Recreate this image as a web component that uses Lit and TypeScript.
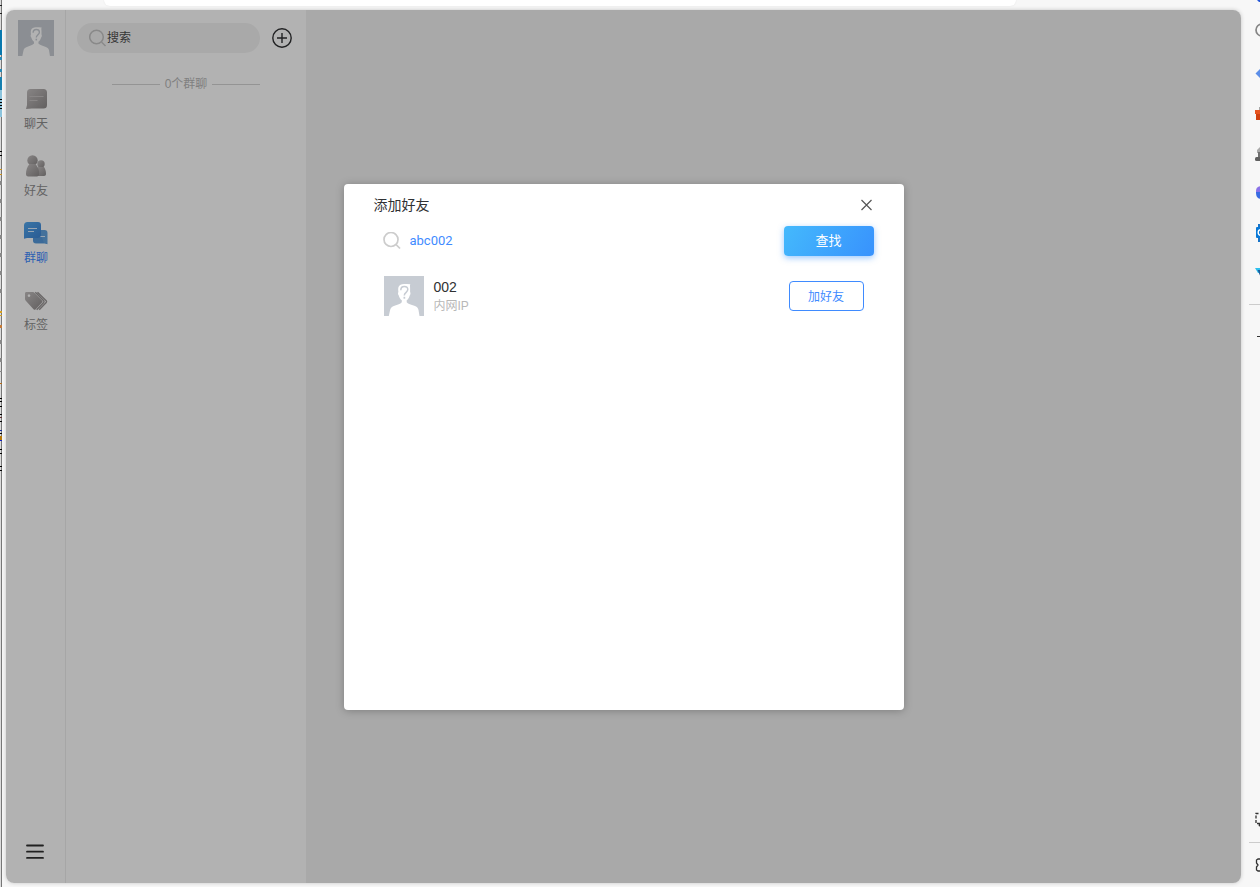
import { LitElement, html, css, svg, TemplateResult } from "lit";
import { customElement, property, state } from "lit/decorators.js";

const fontStack = css`"Liberation Sans", "Noto Sans CJK SC", sans-serif`;

@customElement("user-avatar")
class UserAvatar extends LitElement {
  static styles = css`
    :host { display: block; flex: none; width: 40px; height: 40px; }
    .pic { display: block; width: 100%; height: 100%; }
  `;
  render() {
    return html`<svg class="pic" viewBox="0 0 40 40" aria-hidden="true">
      <rect width="40" height="40" fill="#c7ccd3" />
      <path fill="#fff" d="M14.500 11c.8-2 2.800-3 5.500-3 2 0 4 .2 6.300.2-.6 1.300-.2 2.300-.2 3.800v4c.7.500.4 2.800-.4 3.400-.5 2-1.600 3.700-3 4.900v1.900c1.500 1.800 4.500 2.500 7.600 3.500 2.800.9 3.800 2.300 4.200 4.300L35.500 40H4.800l1.300-6c.4-2 1.600-3.400 4.400-4.300 3.100-1 5.800-1.700 7.300-3.500v-1.900c-1.400-1.200-2.500-2.900-3-4.900-.8-.6-1.100-2.900-.4-3.400-.2-1.700-.4-3.500.1-5z" />
      <path fill="none" stroke="#c7ccd3" stroke-width="1.500" d="M16.800 14.200c0-2.300 1.500-3.700 3.500-3.700 2.100 0 3.500 1.300 3.500 3.100 0 2.600-3.500 2.900-3.500 5.900" />
      <rect x="19.500" y="20.800" width="1.700" height="1.900" fill="#c7ccd3" />
    </svg>`;
  }
}

type NavKey = "chat" | "friends" | "groups" | "tags";

const navIcons: Record<NavKey, TemplateResult> = {
  chat: svg`
    <path fill="url(#g)" d="M6.500 2H19.500a3.500 3.500 0 0 1 3.500 3.500v12.500a3.500 3.500 0 0 1-3.500 3.500H8L2 22l1-4V5.500A3.500 3.500 0 0 1 6.500 2z" />
    <path stroke="#c4c0c0" stroke-width="1" d="M5.500 9.500h14M5.500 13.500h8" />`,
  friends: svg`
    <circle cx="17" cy="10" r="3.700" fill="url(#g)" />
    <path fill="url(#g)" d="M14 13h6c1.500 2.200 2 4.500 2 7 0 1.200-.8 2-2 2h-7z" />
    <circle cx="8.500" cy="6.400" r="5.200" fill="url(#g)" />
    <path fill="url(#g)" d="M5.500 10h6c2.500 3 3.700 5.500 3.700 9.500 0 1.900-.8 2.900-2.500 2.900H4.300c-1.700 0-2.300-.8-2.300-2.300C2 16 3 13 5.500 10z" />`,
  groups: svg`
    <path fill="#62a3de" d="M12 9h8.500a3 3 0 0 1 3 3v11.300l-3-.8H12a3 3 0 0 1-3-3V9z" />
    <path fill="url(#b)" d="M3.500 1h10.500A3 3 0 0 1 17 4v9.500a3.500 3.500 0 0 1-3.500 3.500H3l-3 .8V4.500A3.500 3.500 0 0 1 3.500 1z" />
    <path fill="#3f86d6" d="M9 17h4.500a3.500 3.500 0 0 0 3.500-3.500l3 8.500h-8a3 3 0 0 1-3-3z" opacity=".35" />
    <path stroke="#dcecff" stroke-width="1.200" d="M4 7.500h9M4 10.500h6M16.500 15.500h4.500" />`,
  tags: svg`
    <path fill="url(#g)" fill-rule="evenodd" d="M2.500 4H8.500c1 0 1.500.3 2.200 1l7.300 7.400c.7.800.7 1.500 0 2.200l-6.300 6.600c-.7.700-1.400.7-2.200 0L2 13c-.7-.7-1-1.300-1-2V5.500c0-1 .5-1.500 1.500-1.500zM5 6.300a1.300 1.300 0 1 0 .01 0z" />
    <path fill="none" stroke="#9a9696" stroke-width="1.400" d="M11.300 4.200l8.400 8.500c.5.600.5 1.200 0 1.700l-7 7.400M13.500 4.200l8.700 8.500c.5.600.5 1.200 0 1.700l-7 7.400" />`,
};

@customElement("side-nav")
class SideNav extends LitElement {
  @property() active: NavKey = "groups";
  static styles = css`
    :host { display: flex; flex-direction: column; align-items: center; width: 60px; box-sizing: border-box; padding-top: 10px; border-right: 1px solid #eee; background: #fff; }
    button { font: inherit; border: 0; background: none; padding: 0; cursor: pointer; }
    .me { width: 36px; height: 36px; }
    .items { display: flex; flex-direction: column; gap: 21px; margin-top: 31px; }
    .item { display: flex; flex-direction: column; align-items: center; gap: 4px; padding-left: 1px; color: #8e8e8e; font-size: 12px; line-height: 18px; }
    .active { color: #3f8bff; }
    .menu { margin-top: auto; margin-bottom: 22px; height: 18px; margin-right: 1px; }
    svg { display: block; }
  `;
  render() {
    const items: [NavKey, string][] = [["chat", "聊天"], ["friends", "好友"], ["groups", "群聊"], ["tags", "标签"]];
    return html`
      <user-avatar class="me"></user-avatar>
      <nav class="items">
        ${items.map(([key, label]) => html`
          <button class="item ${key === this.active ? "active" : ""}" @click=${() => (this.active = key)}>
            <svg width="24" height="24" viewBox="0 0 24 24" aria-hidden="true">
              <defs>
                <linearGradient id="g" x1="0" y1="0" x2="1" y2="1"><stop stop-color="#c4c0c0" /><stop offset="1" stop-color="#8d8989" /></linearGradient>
                <linearGradient id="b" x1="0" y1="0" x2="1" y2="1"><stop stop-color="#53a8ee" /><stop offset="1" stop-color="#3d83d4" /></linearGradient>
              </defs>
              ${navIcons[key]}
            </svg>
            <span>${label}</span>
          </button>`)}
      </nav>
      <button class="menu" aria-label="菜单">
        <svg width="18" height="18" viewBox="0 0 18 18"><path stroke="#303030" stroke-width="1.800" stroke-linecap="round" d="M1 2.500h16M1 8.700h16M1 14.900h16" /></svg>
      </button>`;
  }
}

@customElement("group-list")
class GroupList extends LitElement {
  static styles = css`
    :host { display: block; width: 240px; box-sizing: border-box; padding: 13px 14px 0 11px; background: #fff; }
    .bar { display: flex; align-items: center; gap: 12px; }
    .pill { display: flex; align-items: center; flex: 1; min-width: 0; height: 30px; padding: 0 12px; box-sizing: border-box; border-radius: 15px; background: #f3f3f3; }
    .field { flex: 1; min-width: 0; border: 0; padding: 0; outline: 0; background: none; font: inherit; font-size: 12px; }
    .field::placeholder { color: #505050; opacity: 1; }
    .add { flex: none; width: 20px; height: 20px; border: 0; padding: 0; background: none; cursor: pointer; }
    .count { display: flex; align-items: center; justify-content: center; gap: 5px; margin: 22px 0 0 3px; color: #b8b8b8; font-size: 12px; line-height: 18px; }
    .count::before, .count::after { content: ""; width: 48px; height: 1px; background: #d4d4d4; }
    svg { display: block; flex: none; }
  `;
  render() {
    return html`
      <div class="bar">
        <label class="pill">
          <svg width="18" height="18" viewBox="0 0 18 18" aria-hidden="true"><g fill="none" stroke="#c4c4c4" stroke-width="1.500"><circle cx="7.500" cy="8" r="6.800" /><path d="M12.500 13l4 4" /></g></svg>
          <input class="field" type="text" aria-label="搜索" placeholder="搜索" />
        </label>
        <button class="add" aria-label="添加">
          <svg width="20" height="20" viewBox="0 0 20 20"><g fill="none" stroke="#303133" stroke-width="1.400"><circle cx="10" cy="10" r="9.200" /><path d="M10 5v10M5 10h10" /></g></svg>
        </button>
      </div>
      <div class="count">0个群聊</div>`;
  }
}

@customElement("add-friend-dialog")
class AddFriendDialog extends LitElement {
  @state() private query = "abc002";
  static styles = css`
    :host { display: block; width: 560px; min-height: 526px; box-sizing: border-box; padding: 10px 30px; border-radius: 4px; background: #fff; box-shadow: 0 1px 8px rgba(0, 0, 0, .25); }
    .head, .search, .result { display: flex; align-items: center; }
    .title { flex: 1; margin: 0; font-size: 14px; line-height: 22px; font-weight: 400; color: #303133; }
    .close { width: 16px; height: 16px; padding: 0; border: 0; background: none; cursor: pointer; }
    .search { height: 30px; margin-top: 10px; padding-left: 9px; gap: 9px; }
    .field { flex: 1; min-width: 0; border: 0; padding: 0; outline: 0; background: none; font-family: Roboto, "Noto Sans CJK SC", sans-serif; font-size: 13px; color: #3f8bff; }
    .find { width: 90px; height: 30px; border: 0; border-radius: 4px; padding: 0 0 2px; color: #fff; font: inherit; font-size: 13px; background: linear-gradient(120deg, #44b9fc, #3892fd); box-shadow: 0 2px 6px rgba(56, 146, 253, .5); cursor: pointer; }
    .result { margin-top: 20px; padding: 0 10px; gap: 10px; }
    .who { flex: 1; }
    .name { font-size: 14px; line-height: 20px; color: #303133; }
    .from { font-size: 12px; line-height: 18px; color: #b8b8b8; }
    .befriend { width: 75px; height: 30px; padding: 0; border: 1px solid #3f8bff; border-radius: 4px; background: #fff; color: #3f8bff; font: inherit; font-size: 12px; cursor: pointer; }
    svg { display: block; flex: none; }
  `;
  render() {
    return html`
      <header class="head">
        <h2 class="title">添加好友</h2>
        <button class="close" aria-label="关闭">
          <svg width="16" height="16" viewBox="0 0 16 16"><path stroke="#555" stroke-width="1.200" d="M3.500 3l10 10M13.500 3l-10 10" /></svg>
        </button>
      </header>
      <div class="search">
        <svg width="18" height="18" viewBox="0 0 18 18" aria-hidden="true"><g fill="none" stroke="#ccc" stroke-width="1.700"><circle cx="8" cy="7.500" r="7" /><path d="M13 12.500l4 4" /></g></svg>
        <input class="field" type="text" aria-label="查找好友" .value=${this.query} @input=${(e: Event) => (this.query = (e.target as HTMLInputElement).value)} />
        <button class="find">查找</button>
      </div>
      <div class="result">
        <user-avatar></user-avatar>
        <div class="who">
          <div class="name">002</div>
          <div class="from">内网IP</div>
        </div>
        <button class="befriend">加好友</button>
      </div>`;
  }
}

@customElement("browser-rail")
class BrowserRail extends LitElement {
  static styles = css`
    :host { display: flex; flex-direction: column; width: 19px; overflow: hidden; }
    .tool { display: flex; align-items: center; flex: none; width: 34px; height: 40px; padding: 0 0 0 13px; border: 0; background: none; }
    .top { height: 12px; align-items: flex-start; }
    .rule { flex: none; height: 1px; margin: 12px 0 11px 8px; background: #ccc; }
    .low { margin: 3px 0 2px 8px; }
    .end { margin-top: auto; }
    .last { height: 42px; padding-bottom: 2px; box-sizing: border-box; }
    svg { display: block; flex: none; }
  `;
  render() {
    const tools: [string, TemplateResult][] = [
      ["搜索", svg`<circle cx="8" cy="10" r="6" fill="none" stroke="#858585" stroke-width="1.700" />`],
      ["购物", svg`<path fill="#5c8ee8" d="M1.500 13.500L9 6v15z" />`],
      ["工具", svg`<path fill="#e65420" d="M1 10h18v4H1z" /><path fill="#cf4010" d="M2 14h17v6H2z" /><path fill="#aaa" d="M5 7h3v3H5z" />`],
      ["游戏", svg`<path fill="#aaa" d="M7 6l-4 4v3h8V6z" /><path fill="#707070" d="M4 12h8v5H4z" /><rect x="1" y="17" width="12" height="4" rx="1.500" fill="#606060" />`],
      ["应用", svg`<path fill="#8a72e8" d="M8 6C3 6 2 8 2 12h8V6z" /><path fill="#386be2" d="M2 12c0 4 1 7 6 7h3v-7z" />`],
      ["邮件", svg`<rect x="4" y="4" width="12" height="18" fill="#1673c8" /><rect x="2" y="7" width="10" height="11" rx="1" fill="#0879d8" /><circle cx="7" cy="12.500" r="2.800" fill="none" stroke="#fff" stroke-width="1.400" />`],
      ["投放", svg`<path fill="#2ec0ee" d="M1 8h11v5H4z" /><path fill="#195a99" d="M3.500 10H12v10H8z" />`],
    ];
    const tool = (label: string, art: TemplateResult, extra = "") =>
      html`<button class="tool ${extra}" aria-label=${label}><svg width="20" height="24" viewBox="0 0 20 24">${art}</svg></button>`;
    return html`
      <button class="tool top" aria-label="助手"><svg width="20" height="10" viewBox="0 0 20 10"><path fill="#2456d8" d="M3 0h6v2H5z" /></svg></button>
      ${tools.map(([l, a]) => tool(l, a))}
      <div class="rule"></div>
      ${tool("添加", svg`<path stroke="#333" d="M3 12.500h12" />`)}
      ${tool("截图", svg`<path fill="none" stroke="#333" stroke-width="1.300" stroke-dasharray="3 1.500" d="M9 6.500H2v10h7" /><circle cx="6" cy="18" r="1.500" fill="#333" />`, "end")}
      <div class="rule low"></div>
      ${tool("设置", svg`<path fill="none" stroke="#333" stroke-width="1.300" d="M8 6H4L2.500 7v3L4 12l-1.500 2v3L4 18h4" />`, "last")}`;
  }
}

// Sliver of the window behind: [y, height, colour]
const behind: [number, number, string][] = [
  [5, 1, "#222"], [13, 1, "#222"], [30, 25, "#0878ae"], [57, 3, "#2789b6"], [69, 3, "#2789b6"], [77, 13, "#1680b0"], [90, 27, "#8cc4dd"],
  [99, 1, "#000"], [102, 1, "#000"], [105, 1, "#000"], [108, 1, "#000"], [151, 1, "#000"], [155, 1, "#000"], [169, 1, "#c79020"], [174, 1, "#c79020"],
  [181, 4, "#888"], [199, 4, "#888"], [217, 4, "#888"], [235, 4, "#888"], [253, 4, "#888"], [271, 4, "#888"], [289, 4, "#888"],
  [311, 2, "#d6a020"], [315, 1, "#d6a020"], [325, 3, "#c47a38"], [340, 4, "#888"], [358, 4, "#888"], [371, 1, "#888"], [383, 1, "#b46a18"],
  [398, 1, "#000"], [401, 1, "#000"], [406, 1, "#000"], [414, 1, "#000"], [417, 1, "#603030"], [421, 1, "#000"],
  [430, 1, "#1830a0"], [433, 1, "#000"], [436, 4, "#b87808"], [440, 1, "#1020c0"], [449, 1, "#000"], [453, 1, "#000"], [466, 1, "#000"], [470, 1, "#000"],
];

@customElement("app-root")
class AppRoot extends LitElement {
  static styles = css`
    :host { display: flex; height: 100vh; overflow: hidden; background: #f7f7f7; font-family: ${fontStack}; }
    .behind { flex: none; width: 2px; height: 100%; overflow: hidden; background: linear-gradient(90deg, #dcdcdc 50%, #777 50%); }
    .browser { flex: 1; min-width: 0; display: flex; }
    .view { flex: 1; min-width: 0; display: flex; flex-direction: column; padding: 0 0 4px 4px; }
    .chrome { height: 10px; }
    .address { height: 6px; margin: 0 225px 0 98px; border-radius: 0 0 10px 10px; background: #fff; box-shadow: 0 0 2px rgba(0, 0, 0, .08); }
    .app { position: relative; flex: 1; min-height: 0; display: flex; overflow: hidden; border-radius: 8px; background: #f3f3f3; box-shadow: 0 0 4px rgba(0, 0, 0, .2); }
    .mask { position: absolute; inset: 0; display: flex; align-items: center; justify-content: center; background: rgba(0, 0, 0, .3); }
  `;
  render() {
    return html`
      <svg class="behind" width="2" aria-hidden="true">${behind.map(([y, h, c]) => svg`<rect y=${y} width="2" height=${h} fill=${c} />`)}</svg>
      <div class="browser">
        <div class="view">
          <div class="chrome"><div class="address"></div></div>
          <main class="app">
            <side-nav></side-nav>
            <group-list></group-list>
            <div class="mask"><add-friend-dialog role="dialog" aria-label="添加好友"></add-friend-dialog></div>
          </main>
        </div>
        <browser-rail></browser-rail>
      </div>`;
  }
}
